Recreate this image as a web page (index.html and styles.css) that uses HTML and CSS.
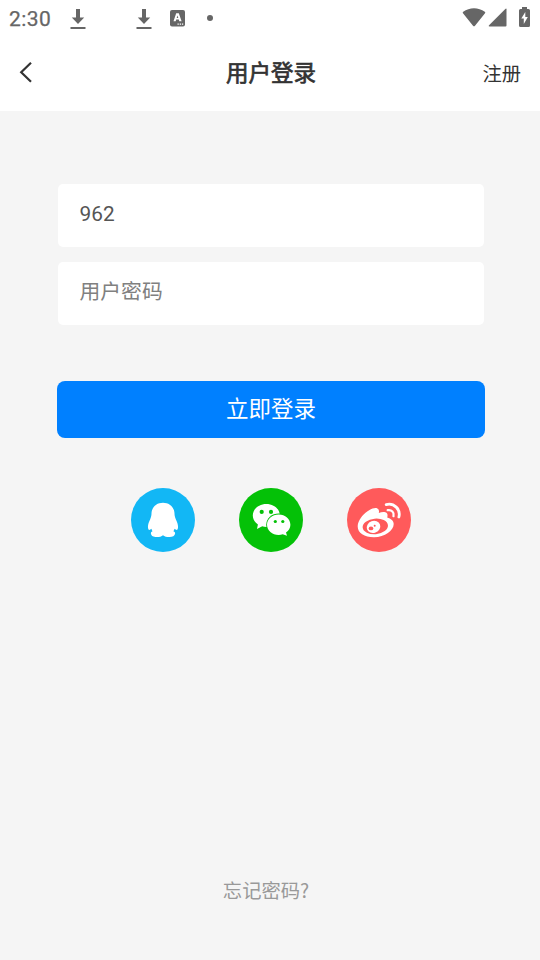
FILE: index.html
```html
<!DOCTYPE html>
<html lang="zh-CN">
<head>
<meta charset="UTF-8">
<meta name="viewport" content="width=device-width, initial-scale=1">
<title>用户登录</title>
<link rel="stylesheet" href="styles.css">
</head>
<body>
<div class="screen">
  <div class="status">
    <span class="time">2:30</span>
    <svg class="download" width="16" height="21" viewBox="0 0 16 21"><path d="M6 0h4v8.500h4.200L8 15 1.800 8.500H6zM.5 18h15v2H.5z"/></svg>
    <svg class="download second" width="16" height="21" viewBox="0 0 16 21"><path d="M6 0h4v8.500h4.200L8 15 1.800 8.500H6zM.5 18h15v2H.5z"/></svg>
    <svg class="keyboard" width="15" height="17" viewBox="0 0 15 17"><rect width="15" height="16.5" rx="2"/><path class="cut" fill-rule="evenodd" d="M6.2 3.2h2.600l2.800 8H9.300l-.5-1.600H6.200l-.5 1.600H3.500zM6.700 8h1.600l-.8-2.600zM7.500 13.500h1.300v1.300H7.500zm2.200 0H11v1.300H9.700zm2.200 0h1.300v1.300h-1.300z"/></svg>
    <span class="dot"></span>
    <svg class="wifi" width="24" height="19" viewBox="0 0 24 19"><path d="M1 5.300q-.7-.8.2-1.500C7.500-.9 16.500-.9 22.800 3.800q.9.700.2 1.500L13 17.800q-1 1-2 0z"/></svg>
    <svg class="signal" width="19" height="19" viewBox="0 0 19 19"><path d="M18.500 1.200v16.300q0 1-1 1H1.600q-1.600 0-.5-1.200L17.300.9q1.200-1 1.200.3z"/></svg>
    <svg class="battery" width="11" height="20" viewBox="0 0 11 20"><path d="M3 0h5v2h1.500Q11 2 11 3.500v15Q11 20 9.500 20h-8Q0 20 0 18.500v-15Q0 2 1.500 2H3z"/><path class="cut" d="M6.300 5 2.300 11.500h2.500V17l4-7H6.300z"/></svg>
  </div>
  <header class="header">
    <svg class="back" width="14" height="22" viewBox="0 0 14 22"><path d="M12 1.800 2.200 11.300l9.800 9.500"/></svg>
    <h1 class="title">用户登录</h1>
    <a class="register">注册</a>
  </header>
  <main class="content">
    <div class="field filled">962</div>
    <div class="field">用户密码</div>
    <div class="submit">立即登录</div>
    <div class="socials">
      <svg width="64" height="64" viewBox="0 0 64 64">
        <circle cx="32" cy="32" r="32" fill="#12b7f5"/>
        <path fill="#fff" d="M32 14.800c-6.500 0-11.300 4.400-11.500 10.800 0 2-.5 3.700-1.300 5.600-1.400 2.900-2.500 5.800-2.200 8.300.1 1.200.6 2.400 1.200 2.400.8 0 1.500-.5 2.300-1.200.1.900.5 1.800 1 2.500-1.300.5-1.700 1.300-1.600 2.300.2 2.500 2.700 3.500 5.700 3.500 2.900 0 5-.5 6.400-1.800 1.400 1.300 3.600 1.800 6.500 1.800 3 0 5.400-1 5.600-3.500.1-1-.4-1.800-1.700-2.300.6-.7.900-1.600 1.100-2.500.8.700 1.500 1.200 2.200 1.200s1.200-1.200 1.300-2.400c.3-2.500-.8-5.400-2.200-8.300-.8-1.900-1.300-3.600-1.300-5.600-.2-6.400-5-10.800-11.500-10.800z"/>
      </svg>
      <svg width="64" height="64" viewBox="0 0 64 64">
        <circle cx="32" cy="32" r="32" fill="#04c107"/>
        <path fill="#fff" d="M27.300 16c-7.500 0-13.500 5-13.500 11.500 0 3.800 2 6.800 5.100 9L18 41l5.200-2.700q2 .6 4.100.6c7.500 0 13.500-5 13.500-11.500S34.800 16 27.300 16z"/>
        <ellipse cx="39.700" cy="36.700" rx="12.500" ry="11.300" fill="#04c107"/>
        <path fill="#fff" d="M39.700 26.400c6.500 0 11.700 4.600 11.700 10.300 0 3.200-1.700 5.900-4.400 7.800l1 3.200-4.300-1.500q-1.900.7-4 .7C33.200 46.900 28 42.300 28 36.700s5.200-10.300 11.700-10.300z"/>
        <g fill="#04c107"><circle cx="22.700" cy="23.900" r="2.100"/><circle cx="32" cy="23.900" r="2.100"/><circle cx="36.300" cy="33.500" r="1.600"/><circle cx="43.800" cy="33.500" r="1.600"/></g>
      </svg>
      <svg width="64" height="64" viewBox="0 0 64 64">
        <circle cx="32" cy="32" r="32" fill="#ff5a5b"/>
        <path fill="#fff" d="M10.700 38.500c0-4.700 3.200-9.700 7.500-13.500 4.300-3.800 9.500-6.100 12.200-4.600 1.600 1 1.900 2.900 1.400 4.500 2.700-1 6.200-1.500 7.900.1 1.200 1.200.9 2.900.5 4.600 3.800 1.100 6.500 3.300 6.500 6.400 0 6.300-8.900 13.200-19.700 13.200-9.700 0-16.300-4.200-16.300-10.700z"/>
        <ellipse cx="28.300" cy="38.400" rx="12.700" ry="7.800" transform="rotate(-5 28.300 38.400)" fill="#ff5a5b"/>
        <ellipse cx="26.500" cy="38.900" rx="6.900" ry="5.900" transform="rotate(-20 26.500 38.900)" fill="#fff"/>
        <ellipse cx="24" cy="40.400" rx="2.300" ry="1.900" fill="#ff5a5b"/><circle cx="27.700" cy="37.800" r="1" fill="#ff5a5b"/>
        <g fill="none" stroke="#fff" stroke-linecap="round"><path stroke-width="2.800" d="M39.200 16.600c7.800-2 14.700 4.600 12.700 12.400"/><path stroke-width="2.300" d="M40.700 22.200c3.800-.8 6.800 2.300 5.800 5.900"/></g>
      </svg>
    </div>
  </main>
  <footer class="forgot">忘记密码?</footer>
</div>
</body>
</html>
```
FILE: styles.css
```css
* { box-sizing: border-box; }
body {
  margin: 0;
  background: #f5f5f5;
  font-family: Roboto, "Noto Sans CJK SC", sans-serif;
  color: #333;
}
.screen { display: flex; flex-direction: column; height: 960px; }
.status {
  display: flex;
  align-items: flex-start;
  height: 37px;
  padding: 7px 10px 0 9px;
  background: #fff;
  color: #666;
  fill: #666;
}
.status svg { flex: none; }
.time { width: 61px; font-size: 21px; line-height: 24px; letter-spacing: .4px; -webkit-text-stroke: .25px #666; }
.download { margin-top: 2px; }
.second { margin-left: 50px; }
.keyboard { margin: 3px 0 0 18px; }
.cut { fill: #fff; }
.dot { width: 6px; height: 6px; margin: 8px 0 0 22px; border-radius: 50%; background: #666; }
.wifi { margin: 1px 2px 0 auto; }
.signal { margin: 1px 12px 0 0; }
.header {
  display: grid;
  grid-template-columns: 100px 1fr 100px;
  align-items: center;
  height: 74px;
  padding: 0 19px;
  background: #fff;
}
.back { margin-top: -5px; fill: none; stroke: #333; stroke-width: 2.2; }
.title { margin: -2px 0 0 2px; text-align: center; font-size: 22.5px; line-height: 32px; font-weight: 400; -webkit-text-stroke: .7px #333; }
.register { justify-self: end; margin-top: 2px; font-size: 19.3px; line-height: 28px; }
.content { flex: 1; padding: 73px 55px 0 57px; }
.field {
  height: 63px;
  margin: 0 1px 15px;
  padding: 0 21.500px;
  border-radius: 5px;
  background: #fff;
  color: #808080;
  font-size: 20.8px;
  line-height: 61px;
}
.filled { color: #555; }
.submit {
  height: 57px;
  margin-top: 56px;
  border-radius: 8px;
  background: #0080ff;
  color: #fff;
  font-size: 22.5px;
  line-height: 57px;
  text-align: center;
}
.socials { display: flex; justify-content: center; gap: 44px; margin-top: 50px; }
.forgot {
  height: 84px;
  padding-right: 8px;
  color: #999;
  font-family: "Noto Sans CJK SC", sans-serif;
  font-size: 19.3px;
  line-height: 28px;
  text-align: center;
}
```
